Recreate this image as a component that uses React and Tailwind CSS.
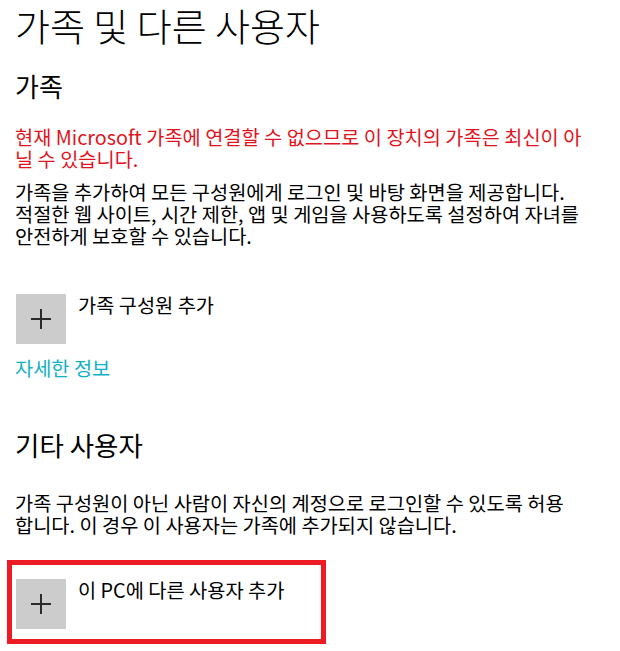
import React from 'react'

const PlusTile = () => (
    <div className="w-[50px] h-[50px] bg-[#cccccc] flex items-center justify-center shrink-0">
        <svg width="20" height="20" viewBox="0 0 20 20">
            <path d="M0 10H20M10 0V20" stroke="#2b2b2b" strokeWidth="2" />
        </svg>
    </div>
)

const App = () => {
    return (
        <main className="w-[620px] h-[651px] overflow-hidden bg-white text-black pl-[15px] font-['Noto_Sans_CJK_KR','Noto_Sans',sans-serif]">
            <h1 className="text-[38px] leading-[46px] pt-[2px] font-light whitespace-nowrap">가족 및 다른 사용자</h1>

            <h2 className="text-[26px] leading-[32px] mt-[22px]">가족</h2>

            <p className="text-[19.75px] leading-[22px] mt-[24px] text-[#e0141e] whitespace-nowrap">
                현재 Microsoft 가족에 연결할 수 없으므로 이 장치의 가족은 최신이 아<br />닐 수 있습니다.
            </p>
            <p className="text-[19.75px] leading-[22px] mt-[11px] whitespace-nowrap">
                가족을 추가하여 모든 구성원에게 로그인 및 바탕 화면을 제공합니다.<br />
                적절한 웹 사이트, 시간 제한, 앱 및 게임을 사용하도록 설정하여 자녀를<br />
                안전하게 보호할 수 있습니다.
            </p>

            <div className="flex items-start gap-[12px] mt-[47px] ml-[1px]">
                <PlusTile />
                <span className="text-[19.75px] leading-[22px]">가족 구성원 추가</span>
            </div>

            <a className="block text-[19.75px] leading-[22px] mt-[13px] text-[#12b1c4]">자세한 정보</a>

            <h2 className="text-[26.5px] leading-[32px] mt-[50px]">기타 사용자</h2>

            <p className="text-[19.75px] leading-[22px] mt-[31px] whitespace-nowrap">
                가족 구성원이 아닌 사람이 자신의 계정으로 로그인할 수 있도록 허용<br />
                합니다. 이 경우 이 사용자는 가족에 추가되지 않습니다.
            </p>

            <div className="-ml-[8px] mt-[24px] w-[319px] border-[5px] border-[#ed1c24] pt-[14px] pb-[10px] pl-[4px]">
                <div className="flex items-start gap-[12px]">
                    <PlusTile />
                    <span className="text-[19.75px] leading-[22px]">이 PC에 다른 사용자 추가</span>
                </div>
            </div>
        </main>
    )
}

export default App
